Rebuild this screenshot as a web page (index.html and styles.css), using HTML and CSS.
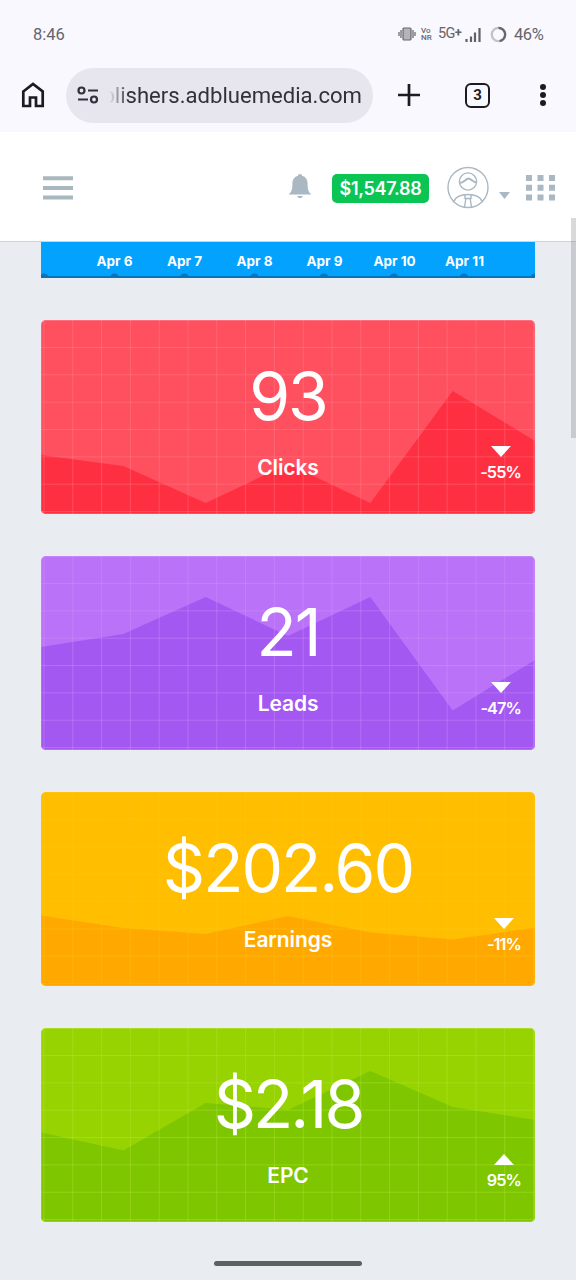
FILE: index.html
```html
<!DOCTYPE html>
<html lang="en">
<head>
  <meta charset="UTF-8" />
  <meta name="viewport" content="width=device-width, initial-scale=1.0" />
  <title>Publisher Dashboard</title>
  <link rel="stylesheet" href="styles.css">
</head>
<body>

  <!-- Phone status bar -->
  <div class="status-bar">
    <span class="time">8:46</span>
    <svg class="vibrate" width="18" height="14" viewBox="0 0 18 14">
      <rect x="5" y="1" width="8" height="12" rx="1" fill="#b5b4bb" stroke="#68676d" stroke-width="1.2" />
      <path d="M3 3v8M15 3v8M1 5v4M17 5v4" stroke="#77767c" stroke-width="1.4" />
    </svg>
    <div class="vonr"><div>Vo</div><div>NR</div></div>
    <span class="network">5G<b>+</b></span>
    <svg class="signal" width="16" height="15" viewBox="0 0 16 15">
      <path d="M1.5 12v3M6 9.500v5.500M10 5.500v9.500M14.500 1v14" stroke="#606066" stroke-width="2.2" />
    </svg>
    <svg class="battery" width="17" height="17" viewBox="0 0 17 17">
      <circle cx="8.500" cy="8.500" r="6.700" fill="none" stroke="#c3c2c9" stroke-width="2.300" />
      <path d="M8.500 1.800A6.700 6.700 0 0 1 9.600 15.100" fill="none" stroke="#68676d" stroke-width="2.300" />
    </svg>
    <span class="percent">46%</span>
  </div>

  <!-- Browser toolbar -->
  <div class="toolbar">
    <svg class="home" width="24" height="26" viewBox="0 0 24 26">
      <path d="M2.300 9.500L12 2l9.700 7.500V24H15v-8.500H9V24H2.300z" fill="none" stroke="#1b1b21" stroke-width="2.700" />
    </svg>
    <div class="address">
      <svg width="22" height="18" viewBox="0 0 22 18" fill="none" stroke="#32313a" stroke-width="2.200">
        <circle cx="4.500" cy="4.500" r="3" />
        <path d="M11 4.500h10M1 13.500h10" />
        <circle cx="17" cy="13.500" r="3" />
      </svg>
      <div class="url">blishers.adbluemedia.com</div>
    </div>
    <svg class="plus" width="22" height="22" viewBox="0 0 22 22">
      <path d="M11 0v22M0 11h22" stroke="#1b1b21" stroke-width="2.700" />
    </svg>
    <span class="tabs">3</span>
    <svg class="more" width="6" height="22" viewBox="0 0 6 22" fill="#1b1b21">
      <circle cx="3" cy="3" r="3" />
      <circle cx="3" cy="11" r="3" />
      <circle cx="3" cy="19" r="3" />
    </svg>
  </div>

  <!-- Site header -->
  <header class="header">
    <svg class="menu" width="30" height="24" viewBox="0 0 30 24">
      <path d="M0 2.200h30M0 12h30M0 21.600h30" stroke="#a9b8bf" stroke-width="4" />
    </svg>
    <svg class="bell" width="24" height="26" viewBox="0 0 24 26" fill="#a9b8c2">
      <path d="M12 1c1.200 0 1.900.7 2 1.800 3.800.9 5.600 4.200 5.600 8 0 6 1 8.600 3.900 10.700H.5c2.900-2.100 3.900-4.700 3.900-10.700 0-3.800 1.800-7.100 5.600-8C10.100 1.700 10.800 1 12 1z" />
      <path d="M9.200 23h5.600c-.4 1.400-1.400 2.200-2.800 2.200s-2.400-.8-2.800-2.200z" />
    </svg>
    <span class="balance">$1,547.88</span>
    <svg class="avatar" width="42" height="43" viewBox="0 0 42 43" fill="none" stroke="#a9b8c2" stroke-width="1.400">
      <circle cx="21" cy="21.500" r="20" />
      <circle cx="21" cy="15.500" r="8.600" />
      <path d="M12.800 17c4 0 6-4.500 8.700-4.500 2.500 0 4.500 4 8 4" stroke-width="2" />
      <path d="M7 35.500c1.500-5 7.500-7 14-7s12.500 2 14 7M18 29v3.500h6V29M18.800 33l-1.300 8M23.200 33l1.300 8" />
    </svg>
    <svg class="caret" width="11" height="7" viewBox="0 0 11 7">
      <path d="M0 0h11l-5.500 7z" fill="#a9b8c2" />
    </svg>
    <svg class="apps" width="29" height="26" viewBox="0 0 29 26">
      <path d="M0 3h29M0 12.800h29M0 22.600h29" stroke="#a9b8c2" stroke-width="6" stroke-dasharray="6 5.500" />
    </svg>
  </header>

  <main class="content">
    <!-- Bottom of the daily chart -->
    <div class="days">
      <span>Apr 6</span>
      <span>Apr 7</span>
      <span>Apr 8</span>
      <span>Apr 9</span>
      <span>Apr 10</span>
      <span>Apr 11</span>
      <svg class="points" width="494" height="5" viewBox="0 0 494 5" fill="#0873b8">
        <path d="M0 4h494" stroke="#0873b8" stroke-width="2" />
        <circle cx="3" cy="5" r="4.500" />
        <circle cx="73.500" cy="5" r="4.500" />
        <circle cx="143.500" cy="5" r="4.500" />
        <circle cx="213.500" cy="5" r="4.500" />
        <circle cx="283" cy="5" r="4.500" />
        <circle cx="353" cy="5" r="4.500" />
        <circle cx="423" cy="5" r="4.500" />
        <circle cx="494" cy="5" r="4.500" />
      </svg>
    </div>

    <!-- Clicks -->
    <section class="card clicks">
      <svg class="graph" viewBox="0 0 494 194" preserveAspectRatio="none">
        <polygon points="0,135 82.300,146 164.700,183 247,144 329.300,183 411.700,71 494,121 494,194 0,194" />
      </svg>
      <div class="value">93</div>
      <div class="label">Clicks</div>
      <div class="trend"><i class="down"></i>-55%</div>
    </section>

    <!-- Leads -->
    <section class="card leads">
      <svg class="graph" viewBox="0 0 494 194" preserveAspectRatio="none">
        <polygon points="0,91 82.300,78 164.700,41 247,80 329.300,41 411.700,154.500 494,104 494,194 0,194" />
      </svg>
      <div class="value">21</div>
      <div class="label">Leads</div>
      <div class="trend"><i class="down"></i>-47%</div>
    </section>

    <!-- Earnings -->
    <section class="card earnings">
      <svg class="graph" viewBox="0 0 494 194" preserveAspectRatio="none">
        <polygon points="0,123.500 82.300,136 164.700,142 247,124 329.300,140.500 411.700,147.500 494,135.500 494,194 0,194" />
      </svg>
      <div class="value">$202.60</div>
      <div class="label">Earnings</div>
      <div class="trend"><i class="down"></i>-11%</div>
    </section>

    <!-- EPC -->
    <section class="card epc">
      <svg class="graph" viewBox="0 0 494 194" preserveAspectRatio="none">
        <polygon points="0,104.500 82.300,122.500 164.700,75 247,82 329.300,43 411.700,79 494,92 494,194 0,194" />
      </svg>
      <div class="value">$2.18</div>
      <div class="label">EPC</div>
      <div class="trend"><i class="up"></i>95%</div>
    </section>
  </main>

  <div class="scrollbar"></div>
  <div class="gesture-bar"></div>

</body>
</html>
```

FILE: styles.css
```css
* {
  box-sizing: border-box;
}

body {
  margin: 0;
  height: 1280px;
  overflow: hidden;
  position: relative;
  background-color: #e9edf2;
  font-family: Inter, "Liberation Sans", sans-serif;
}

svg {
  display: block;
  flex: none;
}

/* Phone status bar */
.status-bar {
  display: flex;
  align-items: center;
  height: 58px;
  padding: 10px 32px 0 33px;
  background-color: #f9f8ff;
  color: #66656b;
  font-family: Roboto, sans-serif;
  font-size: 16.500px;
}

.time {
  margin-right: auto;
}

.vonr {
  width: 12px;
  margin-left: 5px;
  font-size: 8px;
  font-weight: 500;
  line-height: 7px;
}

.network {
  display: flex;
  width: 22px;
  margin-left: 5px;
  font-size: 14.500px;
  line-height: 16px;
  letter-spacing: -0.6px;
}

.network b {
  margin-top: -1px;
  font-size: 13px;
}

.signal {
  margin-left: 5px;
}

.battery {
  margin-left: 9px;
}

.percent {
  margin-left: 7px;
  width: 30px;
  letter-spacing: -0.4px;
}

/* Browser toolbar */
.toolbar {
  display: flex;
  align-items: center;
  height: 74px;
  padding: 0 30px 0 21px;
  background-color: #f9f8ff;
}

.address {
  display: flex;
  align-items: center;
  width: 307px;
  height: 55px;
  margin-left: 21px;
  padding-left: 11px;
  border-radius: 28px;
  background-color: #e7e5ee;
}

.url {
  width: 263px;
  padding-bottom: 1px;
  color: #32313a;
  font-family: Roboto, sans-serif;
  font-size: 22.100px;
  line-height: 30px;
  text-align: right;
  white-space: nowrap;
  -webkit-mask-image: linear-gradient(to right, transparent 10px, #000 30px);
  mask-image: linear-gradient(to right, transparent 10px, #000 30px);
}

.plus {
  margin-left: 25px;
}

.tabs {
  width: 25px;
  height: 25px;
  margin-left: 45px;
  border: 2.500px solid #1b1b21;
  border-radius: 6px;
  color: #1b1b21;
  font-family: Roboto, sans-serif;
  font-size: 15px;
  font-weight: bold;
  line-height: 21px;
  text-align: center;
}

.more {
  margin-left: auto;
}

/* Site header */
.header {
  display: flex;
  align-items: center;
  height: 110px;
  padding: 2px 21px 0 43px;
  border-bottom: 1px solid #cbd4da;
  background-color: #fff;
}

.bell {
  margin-left: 215px;
  margin-top: -4px;
}

.balance {
  width: 97px;
  height: 29px;
  margin-top: 1px;
  margin-left: 20px;
  border-radius: 5px;
  background-color: #0ac554;
  color: #fff;
  font-size: 18px;
  font-weight: 600;
  line-height: 29px;
  letter-spacing: -0.3px;
  text-align: center;
}

.avatar {
  margin-left: 18px;
}

.caret {
  margin: 15px 0 0 10px;
}

.apps {
  margin-left: auto;
}

/* Page content */
.content {
  padding: 0 41px;
}

/* Date axis */
.days {
  position: relative;
  display: grid;
  grid-template-columns: repeat(6, 70px);
  height: 36px;
  padding-left: 38.500px;
  margin-bottom: 42px;
  background-color: #03a2ff;
  color: #fff;
  font-size: 13.500px;
  font-weight: bold;
  line-height: 39px;
  text-align: center;
}

.points {
  position: absolute;
  left: 0;
  bottom: 0;
}

/* Stat cards */
.card {
  position: relative;
  height: 194px;
  margin-bottom: 42px;
  padding-top: 36px;
  border-radius: 5px;
  overflow: hidden;
  color: #fff;
  text-align: center;
}

/* Grid lines over the graph */
.card::after {
  content: "";
  position: absolute;
  inset: 0;
  border: 1px solid var(--line);
  border-radius: 5px;
  background-image:
    linear-gradient(to right, var(--line) 1.200px, transparent 1.200px),
    linear-gradient(to bottom, var(--line) 1.200px, transparent 1.200px);
  background-size: 28.800px 27.350px;
  background-position: 1.500px 26px;
}

.graph {
  position: absolute;
  inset: 0;
  width: 100%;
  height: 100%;
}

.value,
.label,
.trend {
  position: relative;
  z-index: 1;
}

.value {
  font-size: 66px;
  font-weight: 400;
  line-height: 80px;
  letter-spacing: -2px;
}

.label {
  margin-top: 19px;
  font-size: 21px;
  font-weight: 600;
  line-height: 25px;
  letter-spacing: -0.1px;
}

.card .trend {
  position: absolute;
  right: 14px;
  top: 126px;
  font-size: 16.300px;
  font-weight: 600;
  line-height: 20px;
  letter-spacing: -0.9px;
}

.trend i {
  display: block;
  width: 0;
  margin: 0 auto 5px;
  border: 10px solid transparent;
}

.trend .down {
  border-top: 11px solid #fff;
  border-bottom: 0;
}

.trend .up {
  border-top: 0;
  border-bottom: 11px solid #fff;
}

.epc .value {
  letter-spacing: -3px;
}

.clicks {
  --line: rgba(255, 145, 155, 0.32);
  background-color: #ff5060;
}

.clicks polygon {
  fill: #ff2f42;
}

.leads {
  --line: rgba(215, 155, 255, 0.35);
  background-color: #b972f8;
}

.leads polygon {
  fill: #a358f1;
}

.earnings {
  --line: rgba(255, 205, 30, 0.25);
  background-color: #ffbe00;
}

.earnings polygon {
  fill: #ffa900;
}

.epc {
  --line: rgba(190, 235, 70, 0.35);
  background-color: #96d300;
}

.epc polygon {
  fill: #7dc600;
}

/* Overlays on the right and bottom edges */
.scrollbar {
  position: absolute;
  top: 218px;
  right: 0;
  width: 5px;
  height: 220px;
  background-color: rgba(125, 130, 135, 0.3);
}

.gesture-bar {
  position: absolute;
  bottom: 14px;
  left: 214px;
  width: 148px;
  height: 5px;
  border-radius: 3px;
  background-color: #5f6064;
}
```
